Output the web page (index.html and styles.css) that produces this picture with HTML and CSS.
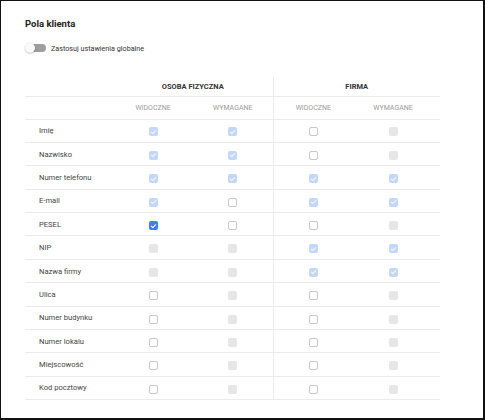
FILE: index.html
```html
<!DOCTYPE html>
<html lang="pl">
<head>
<meta charset="utf-8">
<link rel="stylesheet" href="styles.css">
</head>
<body>
<div class="frame">
  <h1 class="title">Pola klienta</h1>
  <div class="toggle-row">
    <span class="toggle"><span class="track"></span><span class="knob"></span></span>
    <span class="toggle-label">Zastosuj ustawienia globalne</span>
  </div>
  <table class="fields">
    <colgroup>
      <col class="c-label"><col class="c-cb"><col class="c-cb"><col class="c-cb"><col class="c-last">
    </colgroup>
    <thead>
      <tr class="group-row">
        <th></th>
        <th colspan="2" class="group">OSOBA FIZYCZNA</th>
        <th colspan="2" class="group div">FIRMA</th>
      </tr>
      <tr class="sub-row">
        <th></th>
        <th class="sub">WIDOCZNE</th>
        <th class="sub">WYMAGANE</th>
        <th class="sub div">WIDOCZNE</th>
        <th class="sub last">WYMAGANE</th>
      </tr>
    </thead>
    <tbody>
      <tr><td class="lbl">Imię</td><td><i class="cb dc"></i></td><td><i class="cb dc"></i></td><td class="div"><i class="cb u"></i></td><td class="last"><i class="cb d"></i></td></tr>
      <tr><td class="lbl">Nazwisko</td><td><i class="cb dc"></i></td><td><i class="cb dc"></i></td><td class="div"><i class="cb u"></i></td><td class="last"><i class="cb d"></i></td></tr>
      <tr><td class="lbl">Numer telefonu</td><td><i class="cb dc"></i></td><td><i class="cb dc"></i></td><td class="div"><i class="cb dc"></i></td><td class="last"><i class="cb dc"></i></td></tr>
      <tr><td class="lbl">E-mail</td><td><i class="cb dc"></i></td><td><i class="cb u"></i></td><td class="div"><i class="cb dc"></i></td><td class="last"><i class="cb dc"></i></td></tr>
      <tr><td class="lbl">PESEL</td><td><i class="cb c"></i></td><td><i class="cb u"></i></td><td class="div"><i class="cb u"></i></td><td class="last"><i class="cb d"></i></td></tr>
      <tr><td class="lbl">NIP</td><td><i class="cb d"></i></td><td><i class="cb d"></i></td><td class="div"><i class="cb dc"></i></td><td class="last"><i class="cb dc"></i></td></tr>
      <tr><td class="lbl">Nazwa firmy</td><td><i class="cb d"></i></td><td><i class="cb d"></i></td><td class="div"><i class="cb dc"></i></td><td class="last"><i class="cb dc"></i></td></tr>
      <tr><td class="lbl">Ulica</td><td><i class="cb u"></i></td><td><i class="cb d"></i></td><td class="div"><i class="cb u"></i></td><td class="last"><i class="cb d"></i></td></tr>
      <tr><td class="lbl">Numer budynku</td><td><i class="cb u"></i></td><td><i class="cb d"></i></td><td class="div"><i class="cb u"></i></td><td class="last"><i class="cb d"></i></td></tr>
      <tr><td class="lbl">Numer lokalu</td><td><i class="cb u"></i></td><td><i class="cb d"></i></td><td class="div"><i class="cb u"></i></td><td class="last"><i class="cb d"></i></td></tr>
      <tr><td class="lbl">Miejscowość</td><td><i class="cb u"></i></td><td><i class="cb d"></i></td><td class="div"><i class="cb u"></i></td><td class="last"><i class="cb d"></i></td></tr>
      <tr><td class="lbl">Kod pocztowy</td><td><i class="cb u"></i></td><td><i class="cb d"></i></td><td class="div"><i class="cb u"></i></td><td class="last"><i class="cb d"></i></td></tr>
    </tbody>
  </table>
</div>
</body>
</html>
```
FILE: styles.css
```css
* { box-sizing: border-box; }
html, body { margin: 0; padding: 0; background: #fff; }
body { font-family: Roboto, "Liberation Sans", Arial, sans-serif; color: #333; }
.frame {
  width: 485px;
  height: 420px;
  border-top: 1px solid #111;
  border-left: 1px solid #111;
  border-right: 2px solid #111;
  border-bottom: 2px solid #111;
  padding: 16px 0 0 24px;
  overflow: hidden;
}
.title {
  margin: 0;
  font-size: 9.5px;
  line-height: 14px;
  font-weight: 700;
  color: #222;
}
.toggle-row {
  display: flex;
  align-items: center;
  gap: 4px;
  margin-top: 10px;
  height: 14px;
}
.toggle {
  position: relative;
  width: 22px;
  height: 10px;
  display: inline-block;
}
.track {
  position: absolute;
  left: 4px;
  top: 1px;
  width: 17px;
  height: 8px;
  border-radius: 4px;
  background: #9e9e9e;
}
.knob {
  position: absolute;
  left: 0;
  top: 0;
  width: 10px;
  height: 10px;
  border-radius: 50%;
  background: #fafafa;
  box-shadow: 0 0.5px 1.5px rgba(0,0,0,0.35);
}
.toggle-label {
  font-size: 7.2px;
  color: #333;
}
.fields {
  margin-top: 22px;
  border-collapse: collapse;
  table-layout: fixed;
  width: 415px;
}
.c-label { width: 88px; }
.c-cb { width: 80px; }
.c-last { width: 87px; }
.fields th, .fields td { padding: 0; text-align: center; }
.group-row th {
  height: 19px;
  font-size: 7.5px;
  font-weight: 700;
  color: #333;
  border-bottom: 1px solid #ebebeb;
  vertical-align: middle;
  padding-top: 1px;
}
.sub-row th {
  height: 23px;
  font-size: 7px;
  font-weight: 400;
  color: #9a9a9a;
  border-bottom: 1px solid #ebebeb;
  vertical-align: middle;
}
.fields td {
  height: 23.4px;
  border-bottom: 1px solid #ebebeb;
  vertical-align: middle;
}
.fields .div { border-left: 1px solid #ebebeb; }
.fields .last { padding-right: 7px; }
.fields td.lbl {
  text-align: left;
  padding-left: 14px;
  font-size: 7.6px;
  color: #444;
}
.cb {
  display: inline-block;
  width: 9px;
  height: 9px;
  border-radius: 2px;
  vertical-align: middle;
  position: relative;
}
.cb.u { border: 1px solid #c8c8c8; background: #fff; }
.cb.d { background: #e6e6e6; }
.cb.dc { background: #c4d7fa; }
.cb.c { background: #3d7fef; }
.cb.dc::after, .cb.c::after {
  content: "";
  position: absolute;
  left: 3px;
  top: 1.5px;
  width: 2px;
  height: 4px;
  border-right: 1px solid #fff;
  border-bottom: 1px solid #fff;
  transform: rotate(45deg);
}
.cb.dc::after { border-color: rgba(255,255,255,0.85); }
```
